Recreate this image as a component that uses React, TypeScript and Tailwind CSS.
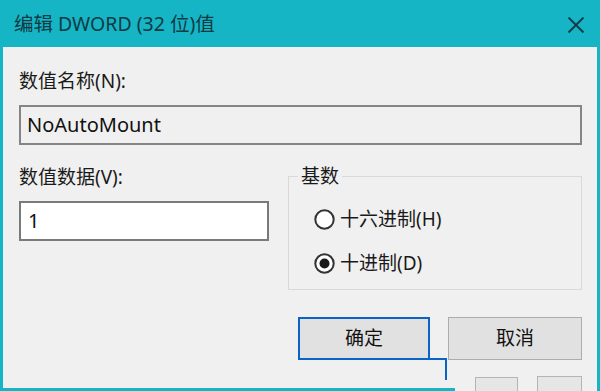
import React from "react";

const font = { fontFamily: '"Noto Sans", "Noto Sans CJK SC", sans-serif' };

function Radio({ checked, label }: { checked?: boolean; label: string }) {
  return (
    <div className="flex items-center gap-[5px] h-[24px]">
      <svg width="21" height="21" viewBox="0 0 21 21" className="shrink-0">
        <circle cx="10.5" cy="10.5" r="9.2" fill="#ffffff" stroke="#333333" strokeWidth="2" />
        {checked && <circle cx="10.5" cy="10.5" r="5" fill="#1a1a1a" />}
      </svg>
      <span className="text-[19px] leading-[24px] text-[#1a1a1a]">{label}</span>
    </div>
  );
}

export default function App() {
  return (
    <div className="w-[600px] h-[391px] bg-[#f0f0f0] flex flex-col overflow-hidden" style={font}>
      <div className="h-[47px] bg-[#16b5c6] flex items-center justify-between pl-[14px] pr-[15px] shrink-0">
        <span className="text-[19.5px] text-[#0f3a44] leading-none">编辑 DWORD (32 位)值</span>
        <svg width="18" height="16" viewBox="0 0 18 16" className="mt-[2px]">
          <path d="M1.5 0.5 L16.5 15.5 M16.5 0.5 L1.5 15.5" stroke="#0d3d4c" strokeWidth="2" fill="none" />
        </svg>
      </div>
      <div className="relative flex-1 flex flex-col border-l-[3px] border-r-[3px] border-b-[3px] border-[#16b5c6] pl-[16px] pr-[15px] pt-[22px]">
        <div className="text-[19px] leading-[24px] text-[#1a1a1a]">数值名称(N):</div>
        <div className="mt-[12px] h-[40px] border-2 border-[#858585] bg-[#f0f0f0] flex items-center pl-[6px] text-[20px] text-[#111111]">
          NoAutoMount
        </div>
        <div className="flex mt-[20px] gap-[19px]">
          <div className="w-[250px] flex flex-col">
            <div className="text-[19px] leading-[24px] text-[#1a1a1a]">数值数据(V):</div>
            <div className="mt-[12px] h-[40px] border-2 border-[#7a7a7a] bg-white flex items-center pl-[7px] text-[20px] text-[#111111]">
              1
            </div>
          </div>
          <div className="relative mt-[11px] w-[294px] h-[114px] border border-[#d9d9d9] flex flex-col pl-[25px] pt-[30px] gap-[20px]">
            <span className="absolute left-[9px] top-[-13px] bg-[#f0f0f0] px-[3px] text-[19px] leading-[24px] text-[#1a1a1a]">
              基数
            </span>
            <Radio label="十六进制(H)" />
            <Radio checked label="十进制(D)" />
          </div>
        </div>
        <div className="flex justify-end gap-[18px] mt-[27px]">
          <div className="w-[132px] h-[43px] border-2 border-[#0a64c8] bg-[#e1e1e1] flex items-center justify-center text-[19px] text-[#111111]">
            确定
          </div>
          <div className="w-[134px] h-[43px] border border-[#adadad] bg-[#e1e1e1] flex items-center justify-center text-[19px] text-[#111111]">
            取消
          </div>
        </div>
        <div className="absolute left-[427px] top-[311px] w-[17px] h-[2px] bg-[#0a64c8]" />
        <div className="absolute left-[442px] top-[311px] w-[2px] h-[22px] bg-[#0a64c8]" />
        <div className="absolute left-[452px] bottom-[-3px] w-[142px] h-[3px] bg-[#f0f0f0]" />
        <div className="absolute left-[472px] bottom-[-3px] w-[43px] h-[14px] border border-b-0 border-[#b5b5b5] bg-[#e6e6e6]" />
        <div className="absolute left-[534px] bottom-[-3px] w-[45px] h-[15px] border border-b-0 border-[#b5b5b5] bg-[#e6e6e6]" />
      </div>
    </div>
  );
}
